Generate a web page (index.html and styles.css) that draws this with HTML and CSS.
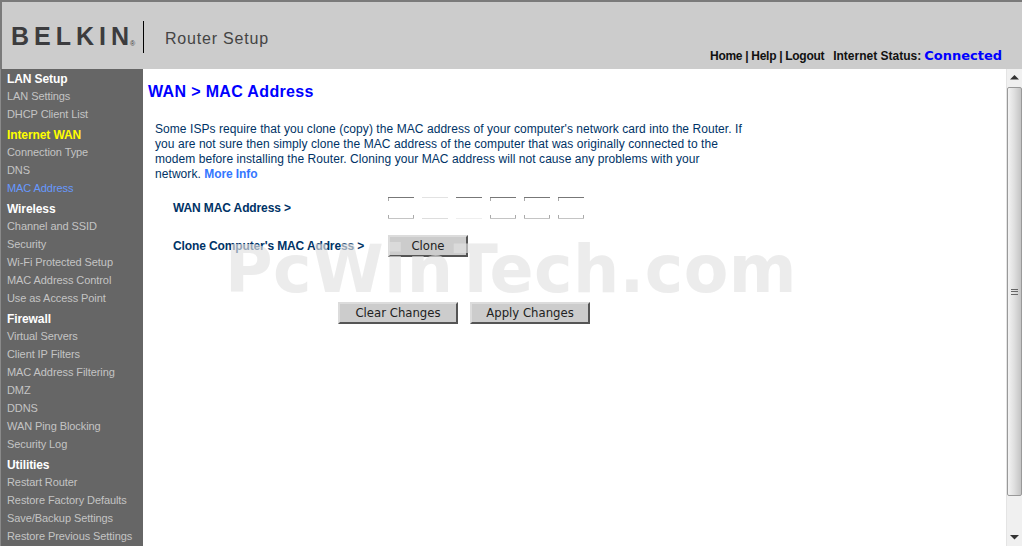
FILE: index.html
```html
<!DOCTYPE html>
<html lang="en">
<head>
<meta charset="utf-8">
<title>Router Setup</title>
<link rel="stylesheet" href="styles.css">
</head>
<body>
<div class="page">
  <header class="top">
    <div class="brand"><span class="logo">BELKIN<span class="reg">®</span></span></div>
    <div class="title">Router Setup</div>
    <div class="status">
      <span class="links">Home | Help | Logout</span>
      <span class="inet">Internet Status:</span>
      <span class="connected">Connected</span>
    </div>
  </header>
  <div class="main">
    <nav class="side">
      <div class="head first">LAN Setup</div>
      <a class="item">LAN Settings</a>
      <a class="item">DHCP Client List</a>
      <div class="head yellow">Internet WAN</div>
      <a class="item">Connection Type</a>
      <a class="item">DNS</a>
      <a class="item current">MAC Address</a>
      <div class="head">Wireless</div>
      <a class="item">Channel and SSID</a>
      <a class="item">Security</a>
      <a class="item">Wi-Fi Protected Setup</a>
      <a class="item">MAC Address Control</a>
      <a class="item">Use as Access Point</a>
      <div class="head">Firewall</div>
      <a class="item">Virtual Servers</a>
      <a class="item">Client IP Filters</a>
      <a class="item">MAC Address Filtering</a>
      <a class="item">DMZ</a>
      <a class="item">DDNS</a>
      <a class="item">WAN Ping Blocking</a>
      <a class="item">Security Log</a>
      <div class="head">Utilities</div>
      <a class="item">Restart Router</a>
      <a class="item">Restore Factory Defaults</a>
      <a class="item">Save/Backup Settings</a>
      <a class="item">Restore Previous Settings</a>
    </nav>
    <main class="content">
      <h1 class="heading">WAN &gt; MAC Address</h1>
      <p class="intro">Some ISPs require that you clone (copy) the MAC address of your computer's network card into the Router. If you are not sure then simply clone the MAC address of the computer that was originally connected to the modem before installing the Router. Cloning your MAC address will not cause any problems with your network. <a class="more">More Info</a></p>
      <div class="row mac-row">
        <div class="label">WAN MAC Address &gt;</div>
        <div class="macs">
          <span class="mac"></span><span class="mac"></span><span class="mac"></span><span class="mac"></span><span class="mac"></span><span class="mac"></span>
        </div>
      </div>
      <div class="row clone-row">
        <div class="label">Clone Computer's MAC Address &gt;</div>
        <button class="btn clone" type="button">Clone</button>
      </div>
      <div class="actions">
        <button class="btn wide" type="button">Clear Changes</button>
        <button class="btn wide" type="button">Apply Changes</button>
      </div>
      <div class="watermark">PcWinTech.com</div>
    </main>
    <div class="scrollbar">
      <div class="arrow"><svg width="9" height="5" viewBox="0 0 9 5"><path d="M4.5 0L9 4.500H0z" fill="#333"/></svg></div>
      <div class="thumb"><span class="grip"></span></div>
      <div class="track"></div>
      <div class="arrow"><svg width="9" height="5" viewBox="0 0 9 5"><path d="M0 0H9L4.500 4.500z" fill="#333"/></svg></div>
    </div>
  </div>
</div>
</body>
</html>
```
FILE: styles.css
```css
* { box-sizing: border-box; }
html, body { margin: 0; padding: 0; height: 100%; overflow: hidden; background: #fff; }
body { font-family: "Liberation Sans", Arial, sans-serif; font-size: 12px; }
.page { width: 1022px; height: 546px; display: flex; flex-direction: column; overflow: hidden; }

.top { height: 69px; flex: none; display: flex; align-items: flex-start; background: #cccccc; border-top: 2px solid #7a7a7a; border-left: 2px solid #7a7a7a; }
.brand { width: 142px; height: 32px; margin-top: 19px; border-right: 1px solid #000; display: flex; align-items: center; padding: 5px 0 0 9px; }
.logo { font-size: 25px; font-weight: bold; letter-spacing: 5px; color: #3c3c3e; white-space: nowrap; line-height: 27px; }
.reg { font-size: 7px; letter-spacing: 0; font-weight: normal; vertical-align: -1px; margin-left: -4px; }
.title { margin: 28px 0 0 21px; font-size: 16px; letter-spacing: 0.8px; line-height: 18px; color: #444; }
.status { margin-left: auto; margin-top: 46px; padding-right: 20px; font-weight: bold; font-size: 12px; line-height: 16px; color: #111; white-space: nowrap; display: flex; align-items: baseline; }
.links { letter-spacing: -0.3px; }
.inet { margin-left: 9px; }
.connected { margin-left: 3px; font-family: "DejaVu Sans", Verdana, sans-serif; font-size: 13px; color: #0000ff; }

.main { flex: 1; display: flex; min-height: 0; }
.side { width: 143px; flex: none; background: #666666; border-left: 1px solid #8a8a8a; padding-left: 6px; overflow: hidden; }
.head { height: 20px; padding-top: 4px; line-height: 16px; font-size: 12px; font-weight: bold; color: #fff; letter-spacing: -0.1px; }
.head.first { height: 18px; padding-top: 2px; }
.head.yellow { color: #ffff00; }
.item { display: block; height: 18px; line-height: 18px; font-size: 11px; color: #c4c4c4; white-space: nowrap; letter-spacing: -0.08px; }
.item.current { color: #6699ff; }

.content { position: relative; flex: 1; min-width: 0; padding: 13px 0 0 5px; color: #003366; }
.heading { margin: 0; font-size: 16px; line-height: 20px; font-weight: bold; color: #0000ff; letter-spacing: 0.35px; }
.intro { width: 592px; margin: 20px 0 0 7px; font-size: 12px; line-height: 15px; letter-spacing: 0.065px; }
.more { color: #3377ff; font-weight: bold; letter-spacing: -0.1px; }
.row { display: flex; align-items: center; margin-left: 25px; }
.label { width: 215px; font-weight: bold; line-height: 16px; white-space: nowrap; letter-spacing: -0.12px; }
.mac-row { height: 22px; margin-top: 15px; }
.clone-row { height: 22px; margin-top: 16px; }
.macs { display: flex; gap: 8px; }
.mac { width: 26px; height: 22px; border-top: 1px solid #777; border-bottom: 1px solid #c4c4c4; background: linear-gradient(#aaa, #aaa) left top / 1px 3px no-repeat, linear-gradient(#aaa, #aaa) left bottom / 1px 3px no-repeat, linear-gradient(#aaa, #aaa) right bottom / 1px 3px no-repeat, #fff; }
.mac:nth-child(2) { border-top-color: #e2e2e2; border-bottom-color: #ddd; background: #fff; }
.mac:nth-child(3) { border-bottom-color: #eee; background: #fff; }
.btn { display: block; margin: 0; padding: 0; height: 22px; background: #cccccc; border: 2px solid; border-color: #dcdcdc #555 #555 #dcdcdc; font-family: "DejaVu Sans", Verdana, sans-serif; font-size: 11.7px; color: #222; }
.clone { width: 80px; }
.wide { width: 120px; }
.actions { display: flex; gap: 12px; margin: 45px 0 0 190px; }
.watermark { position: absolute; left: 82px; top: 161px; font-family: "DejaVu Sans", Verdana, sans-serif; font-size: 65px; line-height: 80px; font-weight: bold; letter-spacing: 0.4px; color: rgba(226, 226, 226, 0.65); white-space: nowrap; pointer-events: none; }

.scrollbar { width: 16px; flex: none; background: #f0f0f0; border-left: 1px solid #e4e4e4; display: flex; flex-direction: column; }
.arrow { height: 17px; flex: none; display: flex; align-items: center; justify-content: center; }
.thumb { height: 409px; flex: none; margin-top: 1px; border: 1px solid #999; border-radius: 2px; background: linear-gradient(to right, #f3f3f3, #dedede 50%, #c4c4c4); display: flex; align-items: center; justify-content: center; }
.grip { width: 7px; height: 6px; border-top: 1px solid #666; border-bottom: 1px solid #666; background: linear-gradient(#666, #666) center / 100% 1px no-repeat; }
.track { flex: 1; }
```
